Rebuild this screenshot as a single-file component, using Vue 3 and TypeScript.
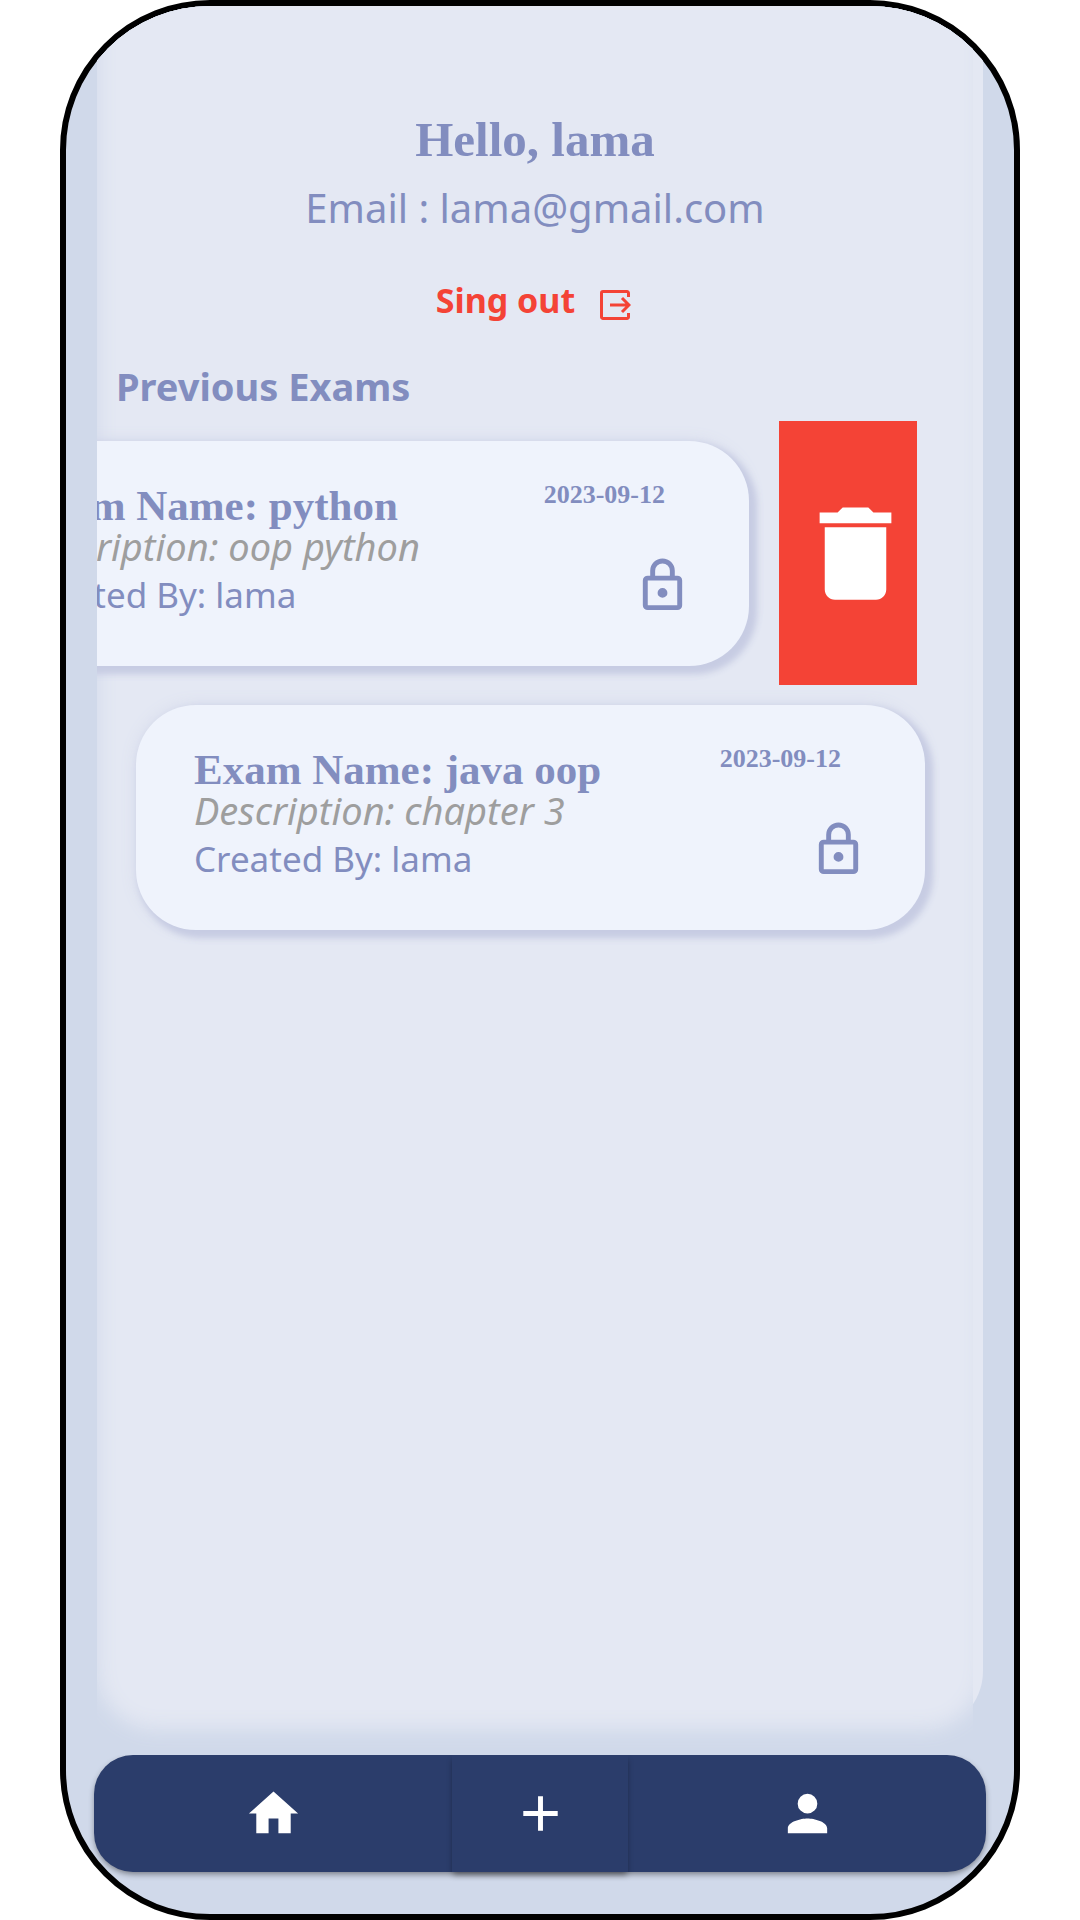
<script setup lang="ts">
import { ref } from 'vue'

interface Exam {
  id: number
  name: string
  description: string
  author: string
  date: string
}

const user = { name: 'lama', email: 'lama@gmail.com' }

const exams = ref<Exam[]>([
  { id: 1, name: 'python', description: 'oop python', author: 'lama', date: '2023-09-12' },
  { id: 2, name: 'java oop', description: 'chapter 3', author: 'lama', date: '2023-09-12' },
])

const openId = ref<number | null>(1)

function toggle(id: number) {
  openId.value = openId.value === id ? null : id
}

function remove(id: number) {
  exams.value = exams.value.filter((exam) => exam.id !== id)
}
</script>

<template>
  <div class="screen">
    <main class="panel">
      <div class="content">
        <div class="sheet">
          <header class="profile">
            <h1 class="hello">Hello, {{ user.name }}</h1>
            <p class="email">Email : {{ user.email }}</p>
            <button class="sign-out" type="button">
              <span>Sing out</span>
              <svg viewBox="0 0 32 32" aria-hidden="true">
                <path d="M29.500 8V4a1.500 1.500 0 0 0-1.500-1.500H4A1.500 1.500 0 0 0 2.500 4v24A1.500 1.500 0 0 0 4 29.500h24a1.500 1.500 0 0 0 1.500-1.500v-4M11 16h19M23 9l7 7-7 7" />
              </svg>
            </button>
          </header>

          <h2 class="heading">Previous Exams</h2>

          <ul class="exams">
            <li v-for="exam in exams" :key="exam.id" class="row" :class="{ open: exam.id === openId }">
              <article class="card" @click="toggle(exam.id)">
                <div class="info">
                  <h3 class="name">Exam Name: {{ exam.name }}</h3>
                  <p class="description">Description: {{ exam.description }}</p>
                  <p class="author">Created By: {{ exam.author }}</p>
                </div>
                <div class="meta">
                  <time class="date" :datetime="exam.date">{{ exam.date }}</time>
                  <svg class="lock" viewBox="0 0 24 24" aria-hidden="true">
                    <path d="M12 17a2 2 0 1 1 0-4 2 2 0 0 1 0 4M18 20V10H6v10h12M18 8a2 2 0 0 1 2 2v10a2 2 0 0 1-2 2H6a2 2 0 0 1-2-2V10a2 2 0 0 1 2-2h1V6a5 5 0 0 1 10 0v2h1M12 3a3 3 0 0 0-3 3v2h6V6a3 3 0 0 0-3-3Z" />
                  </svg>
                </div>
              </article>
              <button v-if="exam.id === openId" class="delete" type="button" aria-label="Delete exam" @click="remove(exam.id)">
                <svg viewBox="0 0 24 24" aria-hidden="true">
                  <path d="M6 19c0 1.100.9 2 2 2h8c1.100 0 2-.9 2-2V6.900H6V19zM19 4h-3.500l-1-1h-5l-1 1H5v2.100h14V4z" />
                </svg>
              </button>
            </li>
          </ul>
        </div>
      </div>
    </main>

    <nav class="bar" aria-label="Main">
      <button class="tab" type="button" aria-label="Home">
        <svg viewBox="0 0 24 24" aria-hidden="true"><path d="M10 20v-6h4v6h5v-8h3L12 3 2 12h3v8z" /></svg>
      </button>
      <button class="tab add" type="button" aria-label="Add exam">
        <svg viewBox="0 0 24 24" aria-hidden="true"><path d="M19 13h-6v6h-2v-6H5v-2h6V5h2v6h6v2z" /></svg>
      </button>
      <button class="tab" type="button" aria-label="Profile">
        <svg viewBox="0 0 24 24" aria-hidden="true"><path d="M12 12a4 4 0 1 0 0-8 4 4 0 0 0 0 8zm0 2c-2.670 0-8 1.340-8 4v2h16v-2c0-2.660-5.330-4-8-4z" /></svg>
      </button>
    </nav>
  </div>
</template>

<style>
body {
  background: #fff;
}
</style>

<style scoped>
.screen {
  --ink: #828dbf;
  --ground: #d0d9ea;
  --sheet: #e4e8f3;
  --red: #f44336;
  box-sizing: border-box;
  display: flex;
  flex-direction: column;
  min-height: 100vh;
  margin: 0 60px;
  padding: 0 28px 42px;
  overflow: hidden;
  border: 6px solid #000;
  border-radius: 150px;
  background: var(--ground);
  color: var(--ink);
  font-family: "Noto Sans", sans-serif;
}

h1,
h2,
h3,
p,
ul {
  margin: 0;
  padding: 0;
}

button {
  margin: 0;
  padding: 0;
  border: 0;
  background: none;
  font: inherit;
  cursor: pointer;
}

svg {
  display: block;
  fill: currentColor;
}

.panel {
  position: relative;
  isolation: isolate;
  display: flex;
  flex: 1;
  margin: 0 3px;
}

/* Flat backing whose edge shows to the right of the soft sheet */
.panel::before {
  content: "";
  position: absolute;
  inset: 0 0 24px;
  z-index: -1;
  border-radius: 0 0 60px 60px;
  background: var(--sheet);
}

.content {
  display: flex;
  flex: 1;
  margin-right: 10px;
  overflow: hidden;
  background: var(--ground);
}

.sheet {
  flex: 1;
  margin: -30px -10px 26px 0;
  padding: 30px 10px 0 0;
  border-radius: 0 0 60px 60px;
  background: var(--sheet);
  box-shadow: inset 0 0 20px var(--ground), 0 0 20px var(--sheet);
}

.profile {
  display: flex;
  flex-direction: column;
  align-items: center;
  padding-top: 102px;
}

.hello,
.name,
.date {
  font-family: "Liberation Serif", serif;
  font-weight: 700;
}

.hello {
  font-size: 49px;
  line-height: 64px;
}

.email {
  margin-top: 4px;
  font-size: 40px;
  line-height: 64px;
}

.sign-out {
  display: flex;
  align-items: center;
  gap: 24px;
  margin: 30px 3px 0 0;
  color: var(--red);
  font-size: 34px;
  font-weight: 700;
  line-height: 60px;
}

.sign-out svg {
  width: 32px;
  height: 32px;
  margin-top: 10px;
  fill: none;
  stroke: currentColor;
  stroke-width: 3;
}

.heading {
  margin: 26px 0 5px;
  padding-left: 19px;
  font-size: 38px;
  font-weight: 700;
  line-height: 60px;
}

.exams {
  list-style: none;
}

.row {
  display: flex;
  padding: 0 48px 0 39px;
}

/* Swiped left to uncover the delete action */
.row.open {
  margin-left: -176px;
  padding-right: 56px;
}

.card {
  box-sizing: border-box;
  display: flex;
  flex: 1;
  justify-content: space-between;
  height: 225px;
  margin: 20px 0 19px;
  padding: 0 57px 0 58px;
  border-radius: 60px;
  background: #eff3fc;
  box-shadow: 5px 5px 6px 3px #c7cce3, 0 0 16px #d5daeb;
}

.row.open .card {
  margin-right: 30px;
}

.info {
  padding-top: 39px;
  white-space: nowrap;
}

.name {
  font-size: 43px;
  line-height: 52px;
}

.description {
  color: #9e9e9e;
  font-size: 38px;
  font-style: italic;
  line-height: 28px;
}

.author {
  margin-top: 11px;
  font-size: 35px;
  line-height: 48px;
}

.meta {
  display: flex;
  flex-direction: column;
  align-items: flex-end;
  padding-top: 38px;
}

.date {
  padding-right: 27px;
  font-size: 26px;
  line-height: 32px;
}

.lock {
  width: 59px;
  height: 59px;
  margin-top: 45px;
}

.delete {
  display: flex;
  flex: none;
  align-items: center;
  justify-content: flex-end;
  width: 138px;
  background: var(--red);
  color: #fff;
}

.delete svg {
  width: 123px;
  height: 123px;
}

.bar {
  display: flex;
  height: 117px;
  border-radius: 39px;
  background: #2b3d6b;
  box-shadow: 0 3px 6px -1px rgba(0, 0, 0, 0.45);
}

.tab {
  display: flex;
  flex: 1;
  align-items: center;
  justify-content: center;
  color: #fff;
}

.tab svg {
  width: 59px;
  height: 59px;
}

.tab.add {
  flex: none;
  width: 176px;
  box-shadow: 0 4px 6px -1px rgba(0, 0, 0, 0.4);
}
</style>
